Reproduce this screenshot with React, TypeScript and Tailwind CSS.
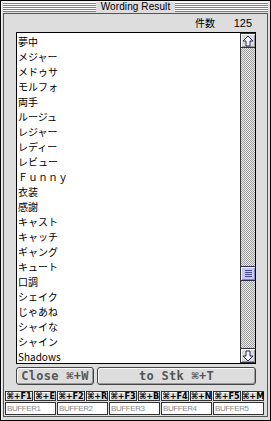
import React from 'react';

const words = [
  '夢中', 'メジャー', 'メドゥサ', 'モルフォ', '両手', 'ルージュ', 'レジャー', 'レディー',
  'レビュー', 'Ｆｕｎｎｙ', '衣装', '感謝', 'キャスト', 'キャッチ', 'ギャング', 'キュート',
  '口調', 'シェイク', 'じゃあね', 'シャイな', 'シャイン', 'Shadows',
];

const keys = [
  ['⌘+F1', '⌘+E'],
  ['⌘+F2', '⌘+R'],
  ['⌘+F3', '⌘+B'],
  ['⌘+F4', '⌘+N'],
  ['⌘+F5', '⌘+M'],
];

const Stripes = () => (
  <div className="flex-1 h-[10px] bg-[repeating-linear-gradient(to_bottom,#ffffff_0_1px,#808080_1px_2px)]" />
);

const Arrow = ({ down }: { down?: boolean }) => (
  <div className="h-[15px] border-y border-[#333] bg-[#dddddd] shadow-[inset_1px_1px_0_#fff,inset_-1px_-1px_0_#999] flex items-center justify-center">
    <svg width="12" height="12" viewBox="0 0 12 12" className={down ? 'rotate-180' : ''}>
      <path d="M6 1 L11 6 L8 6 L8 11 L4 11 L4 6 L1 6 Z" fill="#f4f4ff" stroke="#2a2a5a" strokeWidth="1" />
    </svg>
  </div>
);

const App = () => {
  return (
    <div className="w-[271px] h-[421px] border border-black bg-[#dddddd] flex flex-col shadow-[inset_1px_1px_0_#f4f4ff] font-['Liberation_Sans',sans-serif]">
      {/* title bar */}
      <div className="h-[12px] px-[2px] flex items-center">
        <Stripes />
        <div className="px-[5px] text-[10px] leading-[10px] text-black tracking-[0.1px]">Wording Result</div>
        <Stripes />
      </div>

      {/* content panel */}
      <div className="mx-[2px] h-[404px] border border-[#555] flex flex-col">
        {/* count */}
        <div className="h-[18px] flex items-center text-black">
          <span className="ml-[191px] font-['Noto_Sans_CJK_JP',sans-serif] text-[10px] leading-[10px]">件数</span>
          <span className="ml-auto mr-[15px] text-[11px] leading-[11px]">125</span>
        </div>

        {/* list */}
        <div className="ml-[12px] w-[240px] h-[332px] border border-black bg-white flex">
          <div className="flex-1 pl-[1px] pt-[1px] font-['Noto_Sans_CJK_JP',sans-serif] text-[10px] leading-[15px] text-black">
            {words.map((w) => (
              <div key={w} className="h-[15px] whitespace-nowrap">{w}</div>
            ))}
          </div>
          <div className="w-[15px] border-l border-[#333] flex flex-col">
            <Arrow />
            <div className="relative flex-1 bg-[repeating-conic-gradient(#9a9a9a_0_25%,#eeeeee_0_50%)] bg-[length:2px_2px]">
              <div className="absolute left-0 right-0 top-[218px] h-[15px] border-y border-[#2a2a5a] bg-[#c8c8f4] shadow-[inset_1px_1px_0_#eeeeff,inset_-1px_-1px_0_#8888bb] flex flex-col items-center justify-center gap-[1px]">
                <div className="w-[7px] h-[1px] bg-[#4a4a8a]" />
                <div className="w-[7px] h-[1px] bg-[#4a4a8a]" />
                <div className="w-[7px] h-[1px] bg-[#4a4a8a]" />
                <div className="w-[7px] h-[1px] bg-[#4a4a8a]" />
              </div>
            </div>
            <Arrow down />
          </div>
        </div>

        {/* buttons */}
        <div className="mt-[3px] ml-[12px] w-[240px] flex gap-[3px] font-['DejaVu_Sans_Mono',monospace] font-bold text-[12px] text-[#555]">
          <div className="w-[78px] h-[18px] border border-[#444] rounded-[3px] bg-[#dddddd] shadow-[inset_1px_1px_0_#fff,inset_-1px_-1px_0_#999] flex items-center justify-center tracking-[0.3px]">
            Close ⌘+W
          </div>
          <div className="flex-1 h-[18px] border border-[#444] rounded-[3px] bg-[#dddddd] shadow-[inset_1px_1px_0_#fff,inset_-1px_-1px_0_#999] flex items-center justify-center tracking-[0.3px]">
            to Stk ⌘+T
          </div>
        </div>

        {/* shortcut keys */}
        <div className="mt-[6px] ml-[1px] flex gap-[1px] font-['DejaVu_Sans_Condensed','DejaVu_Sans',sans-serif] font-bold text-[9px] text-black">
          {keys.map(([a, b]) => (
            <div key={a} className="flex gap-[1px]">
              <div className="w-[28px] h-[10px] border border-[#333] bg-[#dddddd] shadow-[inset_1px_1px_0_#fff] flex items-center justify-center leading-[8px]">{a}</div>
              <div className="w-[22px] h-[10px] border border-[#333] bg-[#dddddd] shadow-[inset_1px_1px_0_#fff] flex items-center justify-center leading-[8px]">{b}</div>
            </div>
          ))}
        </div>

        {/* buffers */}
        <div className="mt-[1px] ml-[1px] flex gap-[1px] text-[8px] text-[#888] tracking-[-0.4px]">
          {[1, 2, 3, 4, 5].map((n) => (
            <div key={n} className="w-[51px] h-[13px] border border-[#333] bg-white pl-[1px] flex items-center leading-[8px]">
              BUFFER{n}
            </div>
          ))}
        </div>
      </div>
    </div>
  );
};

export default App;
